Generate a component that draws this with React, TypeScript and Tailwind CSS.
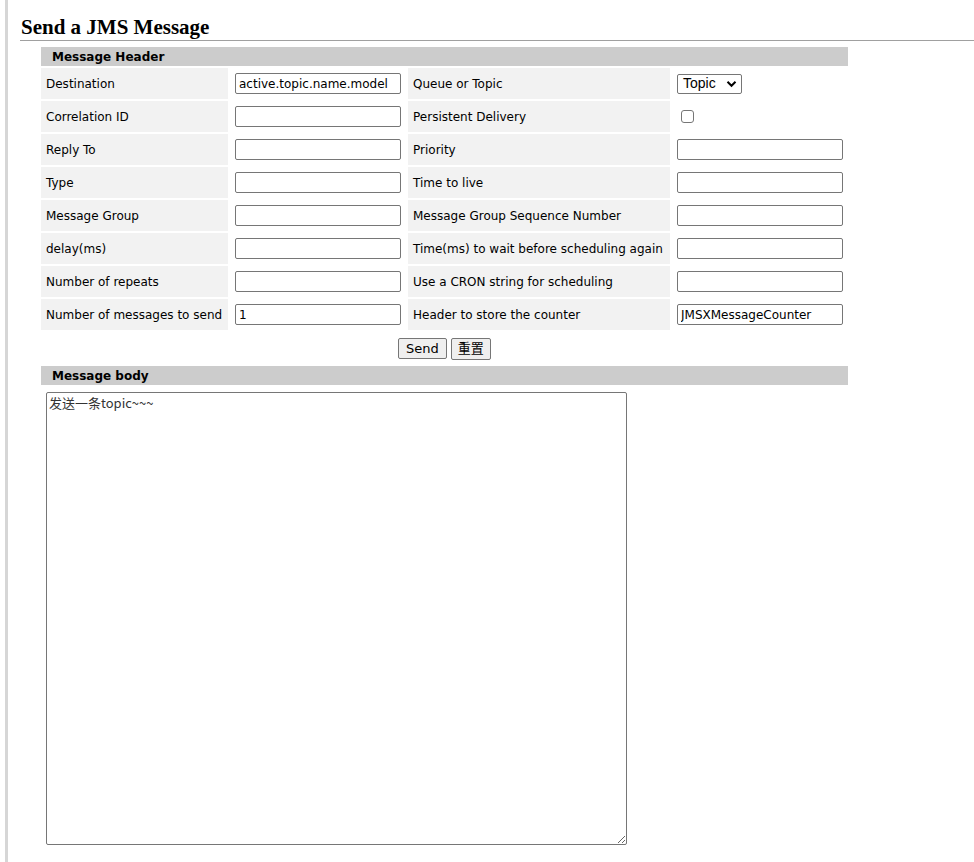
import React from 'react';

const labelFont = { fontFamily: '"DejaVu Sans", Verdana, sans-serif' };

type Row = {
  label: string;
  value?: string;
  label2: string;
  kind: 'input' | 'select' | 'checkbox';
  value2?: string;
};

const rows: Row[] = [
  { label: 'Destination', value: 'active.topic.name.model', label2: 'Queue or Topic', kind: 'select' },
  { label: 'Correlation ID', label2: 'Persistent Delivery', kind: 'checkbox' },
  { label: 'Reply To', label2: 'Priority', kind: 'input' },
  { label: 'Type', label2: 'Time to live', kind: 'input' },
  { label: 'Message Group', label2: 'Message Group Sequence Number', kind: 'input' },
  { label: 'delay(ms)', label2: 'Time(ms) to wait before scheduling again', kind: 'input' },
  { label: 'Number of repeats', label2: 'Use a CRON string for scheduling', kind: 'input' },
  { label: 'Number of messages to send', value: '1', label2: 'Header to store the counter', kind: 'input', value2: 'JMSXMessageCounter' },
];

const TextBox = ({ value = '' }: { value?: string }) => (
  <input
    type="text"
    defaultValue={value}
    className="h-[21px] w-[166px] rounded-[2px] border border-[#767676] bg-white px-[3px] text-[12px] text-black outline-none"
    style={labelFont}
  />
);

export default function App() {
  return (
    <div className="flex min-h-screen bg-white text-black">
      <div className="w-[5px] shrink-0" />
      <div className="w-[3px] shrink-0 bg-[#d6d6d6]" />
      <div className="flex-1 pl-[12px]">
        <h1
          className="h-[41px] border-b border-[#a0a0a0] pl-[1px] pt-[15px] text-[21px] font-bold leading-[24px]"
          style={{ fontFamily: '"Liberation Serif", "DejaVu Serif", serif' }}
        >
          Send a JMS Message
        </h1>

        <div className="ml-[21px] mt-[6px] w-[807px]" style={labelFont}>
          <div className="mb-[2px] flex h-[19px] items-center bg-[#cccccc] pl-[11px] pt-[1px] text-[12px] font-bold">
            Message Header
          </div>
          <div className="grid grid-cols-[187px_176px_262px_176px] gap-[2px] text-[12px]">
            {rows.map((r) => (
              <React.Fragment key={r.label}>
                <div className="flex h-[31px] items-center bg-[#f2f2f2] pl-[5px] whitespace-nowrap">{r.label}</div>
                <div className="flex h-[31px] items-center pl-[5px]">
                  <TextBox value={r.value} />
                </div>
                <div className="flex h-[31px] items-center bg-[#f2f2f2] pl-[5px] whitespace-nowrap">{r.label2}</div>
                <div className="flex h-[31px] items-center pl-[5px]">
                  {r.kind === 'select' && (
                    <div
                      className="flex h-[20px] w-[65px] items-center justify-between rounded-[2px] border border-[#767676] bg-white pl-[5px] pr-[4px] text-[14px]"
                      style={{ fontFamily: '"Liberation Sans", Arial, sans-serif' }}
                    >
                      <span>Topic</span>
                      <svg width="11" height="8" viewBox="0 0 11 8">
                        <path d="M1.5 1.8 L5.5 5.8 L9.5 1.8" fill="none" stroke="#000" strokeWidth="2" />
                      </svg>
                    </div>
                  )}
                  {r.kind === 'checkbox' && (
                    <div className="ml-[4px] h-[13px] w-[13px] rounded-[3px] border border-[#767676] bg-white" />
                  )}
                  {r.kind === 'input' && <TextBox value={r.value2} />}
                </div>
              </React.Fragment>
            ))}
          </div>

          <div className="flex h-[35px] items-center justify-center gap-[4px] pt-[2px]">
            <button className="h-[21px] rounded-[2px] border border-[#767676] bg-[#efefef] px-[7px] text-[13px] leading-none">
              Send
            </button>
            <button
              className="h-[22px] rounded-[2px] border border-[#767676] bg-[#efefef] px-[6px] text-[13px] leading-none"
              style={{ fontFamily: '"DejaVu Sans", "Noto Sans CJK SC", sans-serif' }}
            >
              重置
            </button>
          </div>

          <div className="mb-[7px] mt-[1px] flex h-[19px] items-center bg-[#cccccc] pl-[11px] pt-[1px] text-[12px] font-bold">
            Message body
          </div>
          <textarea
            defaultValue="发送一条topic~~~"
            className="ml-[5px] block h-[453px] w-[581px] rounded-[2px] border border-[#767676] bg-white px-[2px] py-[2px] text-[13px] leading-[16px] text-[#333] outline-none"
            style={{ fontFamily: '"Noto Sans CJK SC", "Noto Sans", sans-serif' }}
          />
        </div>
      </div>
    </div>
  );
}
